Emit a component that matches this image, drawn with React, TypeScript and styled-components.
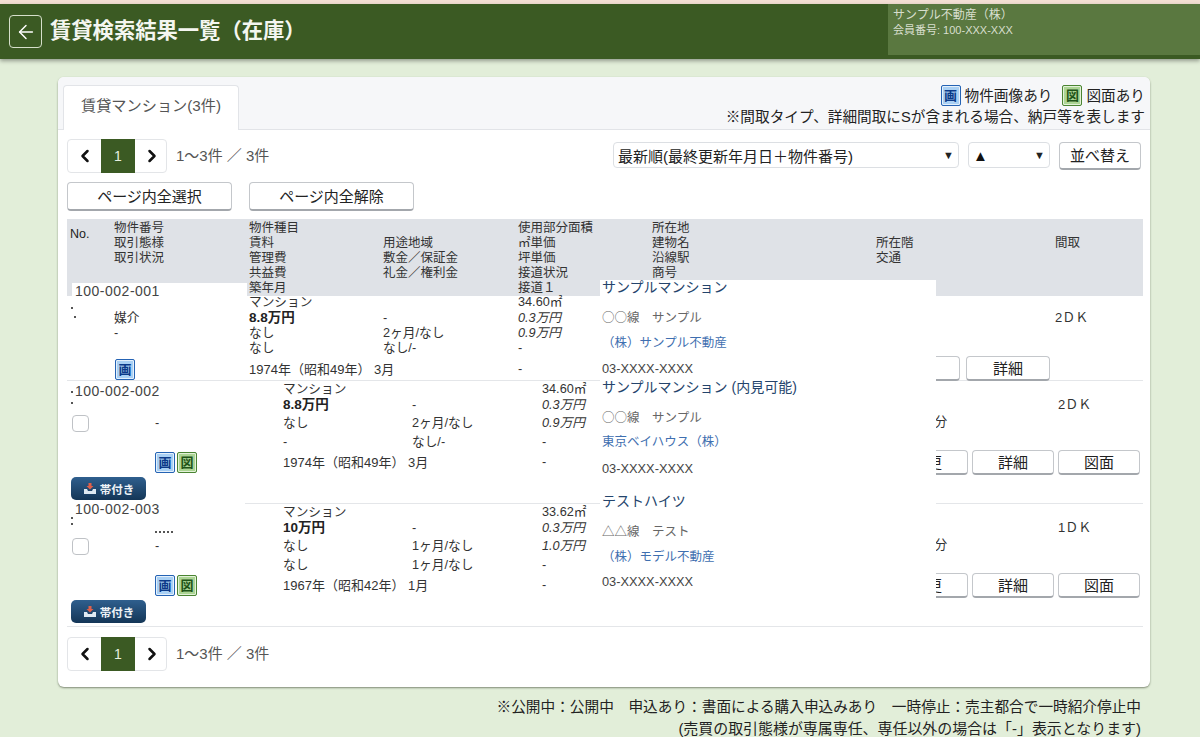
import React from "react";
import styled, { createGlobalStyle } from "styled-components";
import { ArrowLeft, ChevronLeft, ChevronRight } from "lucide-react";

const Global = createGlobalStyle`
  html, body { margin: 0; padding: 0; height: 737px; overflow: hidden; background: #e2eed9; }
  body { font-family: "Liberation Sans", "Noto Sans CJK JP", sans-serif; color: #333; }
  * { box-sizing: border-box; }
`;

const Page = styled.div`
  width: 1200px;
  height: 737px;
  border-top: 4px solid #f3dfd3;
`;
const Header = styled.header`
  height: 55px;
  background: #3b5a23;
  box-shadow: 0 2px 4px rgba(0, 0, 0, 0.35);
  display: flex;
  align-items: flex-start;
`;
const BackButton = styled.button`
  width: 33px;
  height: 33px;
  margin: 11px 0 0 9px;
  padding: 0;
  display: flex;
  align-items: center;
  justify-content: center;
  background: transparent;
  border: 1px solid #d6dfcb;
  border-radius: 4px;
  color: #fff;
`;
const Title = styled.h1`
  margin: 11px 0 0 8px;
  flex: 1;
  font-size: 21.3px;
  line-height: 32px;
  font-weight: 700;
  color: #f4f6f0;
  white-space: nowrap;
`;
const Account = styled.div`
  width: 312px;
  height: 51px;
  padding: 4px 5px;
  background: #5a7840;
  color: #d8dfce;
`;
const AccountName = styled.div`
  font-size: 12px;
  line-height: 15px;
`;
const AccountId = styled.div`
  font-size: 11px;
  line-height: 15px;
`;

const Card = styled.main`
  width: 1092px;
  height: 610px;
  margin: 18px 0 0 58px;
  background: #fff;
  border-radius: 6px;
  box-shadow: 0 1px 2px rgba(60, 70, 50, 0.6);
`;
const TabBar = styled.div`
  height: 53px;
  padding: 8px 5px 0;
  background: #f6f7f9;
  border-radius: 6px 6px 0 0;
  border-bottom: 1px solid #e2e4e8;
  display: flex;
  justify-content: space-between;
`;
const Tab = styled.div`
  width: 176px;
  height: 45px;
  padding-bottom: 8px;
  background: #fff;
  border: 1px solid #e2e4e8;
  border-bottom: none;
  border-radius: 4px 4px 0 0;
  display: flex;
  align-items: center;
  justify-content: center;
  font-size: 15.2px;
  color: #555;
`;
const LegendBlock = styled.div`
  display: flex;
  flex-direction: column;
  align-items: flex-end;
  color: #222;
  font-size: 14.65px;
  line-height: 22px;
`;
const LegendRow = styled.div`
  display: flex;
  align-items: center;
  height: 21px;
  gap: 4px;
`;
const LegendLabel = styled.span<{ $gap?: number }>`
  margin-right: ${(p) => p.$gap ?? 0}px;
`;
const Tile = styled.span<{ $kind: "image" | "plan"; $nudge?: number }>`
  width: 20px;
  height: 21px;
  margin-left: ${(p) => p.$nudge ?? 0}px;
  display: inline-flex;
  align-items: center;
  justify-content: center;
  font-size: 13px;
  line-height: 1;
  font-weight: 700;
  border-radius: 2px;
  border: 1.5px solid ${(p) => (p.$kind === "image" ? "#2563b4" : "#4a8432")};
  box-shadow: inset 0 0 0 1px ${(p) => (p.$kind === "image" ? "#e4f0fb" : "#e3f1d8")};
  background: ${(p) => (p.$kind === "image" ? "#a9d0f4" : "#acd594")};
  color: ${(p) => (p.$kind === "image" ? "#0b3a88" : "#1f5418")};
`;
const TileRow = styled.div`
  display: flex;
  gap: 2px;
`;

const Body = styled.div`
  padding: 9px 7px 0 9px;
`;
const Toolbar = styled.div`
  display: flex;
  align-items: flex-start;
  height: 34px;
`;
const Pager = styled.div`
  display: flex;
  align-items: center;
  height: 34px;
  font-size: 15px;
  color: #555;
`;
const PagerText = styled.span`
  margin-top: -3px;
`;
const PagerBox = styled.div`
  width: 100px;
  height: 34px;
  display: grid;
  grid-template-columns: 33px 34px 33px;
  border: 1px solid #e3e5e8;
  border-radius: 4px;
  margin-right: 9px;
  color: #111;
`;
const PagerCell = styled.span<{ $current?: boolean }>`
  display: flex;
  align-items: center;
  justify-content: center;
  background: ${(p) => (p.$current ? "#3b5a23" : "transparent")};
  color: ${(p) => (p.$current ? "#e8efe0" : "#111")};
  font-size: 14px;
  margin: -1px 0;
`;
const Sorters = styled.div`
  margin-left: auto;
  padding: 3px 2px 0 0;
  display: flex;
  gap: 9px;
`;
const SelectBox = styled.div<{ $w: number }>`
  width: ${(p) => p.$w}px;
  height: 26px;
  padding: 0 4px 0 4px;
  display: flex;
  align-items: center;
  justify-content: space-between;
  background: #fff;
  border: 1px solid #dcdfe3;
  border-radius: 4px;
  font-size: 15px;
  color: #222;
`;
const Caret = styled.span`
  font-size: 11px;
  color: #222;
`;
const SortMark = styled.span`
  font-size: 15px;
  color: #111;
`;
const Button = styled.button<{ $w: number; $h?: number }>`
  width: ${(p) => p.$w}px;
  height: ${(p) => p.$h ?? 25}px;
  padding: 0 0 2px;
  background: #fff;
  border: 1px solid #c4c7cb;
  border-bottom: 2px solid #a3a7ac;
  border-radius: 4px;
  font-family: inherit;
  font-size: 15px;
  color: #222;
  white-space: nowrap;
`;
const SelectAllRow = styled.div`
  display: flex;
  gap: 17px;
  margin: 9px 0 8px;
`;

const TableWrap = styled.div`
  position: relative;
  width: 1076px;
`;
const HeadRow = styled.div`
  height: 77px;
  background: #dfe2e7;
  display: grid;
  grid-template-columns: 47px 135px 134px 135px 134px 224px 179px 88px;
  font-size: 12.5px;
  line-height: 15px;
  color: #333;
  padding-top: 2px;
`;
const HeadCell = styled.div<{ $skip?: number }>`
  padding-top: ${(p) => (p.$skip ?? 0) * 15}px;
  white-space: nowrap;
`;
const HeadNo = styled.div`
  padding: 6px 0 0 3px;
  font-size: 12.5px;
  color: #222;
`;

const Row = styled.div<{ $cols: string; $h: number }>`
  position: relative;
  height: ${(p) => p.$h}px;
  display: grid;
  grid-template-columns: ${(p) => p.$cols};
  align-items: start;
  border-bottom: 1px solid #e4e6e9;
  font-size: 12.7px;
`;
const Stack = styled.div<{ $rows: string; $lift?: number }>`
  display: grid;
  grid-template-rows: ${(p) => p.$rows};
  align-items: center;
  margin-top: ${(p) => p.$lift ?? 0}px;
  min-width: 0;
`;
const Line = styled.span<{ $strong?: boolean; $slant?: boolean }>`
  display: block;
  white-space: nowrap;
  line-height: 1;
  font-size: ${(p) => (p.$strong ? "13.5px" : "inherit")};
  font-weight: ${(p) => (p.$strong ? 700 : 400)};
  font-style: ${(p) => (p.$slant ? "italic" : "normal")};
  color: ${(p) => (p.$strong ? "#222" : "#333")};
`;
const YearLine = styled(Line)`
  font-size: 13px;
`;
const Tail = styled(Stack)<{ $tailCols: string }>`
  grid-template-columns: ${(p) => p.$tailCols};
`;
const AccessLine = styled(Line)`
  grid-row: 3;
  grid-column: 2;
  margin-left: 22px;
`;
const LayoutLine = styled(Line)<{ $row: number }>`
  grid-row: ${(p) => p.$row};
  grid-column: 3;
  font-size: 13px;
`;
const Actions = styled.div<{ $inset: number; $gap: number; $drop?: number }>`
  grid-row: 5;
  grid-column: 1 / -1;
  justify-self: end;
  display: flex;
  gap: ${(p) => p.$gap}px;
  margin-top: ${(p) => p.$drop ?? 0}px;
  margin-right: ${(p) => p.$inset}px;
`;

const NoCell = styled.div`
  display: flex;
  flex-direction: column;
  align-items: flex-start;
`;
const Plate = styled.div<{ $lift: number; $w: number; $inset: number; $h: number }>`
  position: relative;
  z-index: 1;
  width: ${(p) => p.$w}px;
  height: ${(p) => p.$h}px;
  margin: ${(p) => p.$lift}px 0 0 ${(p) => p.$inset}px;
  padding-left: ${(p) => 8 - p.$inset}px;
  background: #fff;
  display: flex;
  align-items: center;
  font-size: 14px;
  letter-spacing: 0.5px;
  color: #444;
  white-space: nowrap;
`;
const Check = styled.span<{ $gap: number }>`
  width: 17px;
  height: 17px;
  margin: ${(p) => p.$gap}px 0 0 5px;
  border: 1px solid #bfc2c6;
  border-radius: 4px;
  background: #fff;
  flex: none;
`;
const Band = styled.button`
  width: 75px;
  height: 23px;
  margin: 45px 0 0 4px;
  padding: 0;
  display: flex;
  align-items: center;
  justify-content: center;
  gap: 3px;
  background: linear-gradient(#2f5f8e, #143657);
  border: none;
  border-radius: 5px;
  color: #eef3f7;
  font-family: inherit;
  font-size: 11.5px;
  font-weight: 700;
`;
const Speck = styled.i<{ $x: number; $y: number; $w?: number }>`
  position: absolute;
  z-index: 2;
  left: ${(p) => p.$x}px;
  top: ${(p) => p.$y}px;
  width: ${(p) => p.$w ?? 2}px;
  height: 1.5px;
  background: repeating-linear-gradient(90deg, #555 0 2px, transparent 2px 4px);
`;

const Mask = styled.aside`
  position: absolute;
  z-index: 2;
  left: 533px;
  top: 61px;
  width: 336px;
  height: 322px;
  padding-left: 2px;
  background: #fff;
`;
const Listing = styled.div<{ $after: number }>`
  margin-bottom: ${(p) => p.$after}px;
`;
const ListingName = styled.div`
  font-size: 14px;
  line-height: 14px;
  color: #24446c;
  white-space: nowrap;
`;
const ListingStation = styled.div`
  margin-top: 16px;
  font-family: "Noto Sans CJK JP", sans-serif;
  font-size: 12.5px;
  line-height: 14px;
  color: #666;
`;
const ListingCompany = styled.div<{ $gap?: number }>`
  margin-top: ${(p) => p.$gap ?? 12}px;
  font-size: 12.5px;
  line-height: 14px;
  color: #3f6fb0;
`;
const ListingPhone = styled.div<{ $gap?: number }>`
  margin-top: ${(p) => p.$gap ?? 12}px;
  font-size: 12.8px;
  line-height: 14px;
  color: #444;
`;

const FootPager = styled(Pager)`
  margin-top: 10px;
`;
const Notes = styled.div`
  width: 1141px;
  margin-top: 9px;
  text-align: right;
  line-height: 22px;
  color: #222;
  white-space: nowrap;
`;
const NoteLine = styled.div<{ $size: number }>`
  font-size: ${(p) => p.$size}px;
`;

const InboxIcon = () => (
  <svg width="14" height="13" viewBox="0 0 14 13" aria-hidden="true">
    <path d="M1 7h3l1 2h4l1-2h3v5H1z" fill="#dfeaf3" />
    <path d="M5.5 1h3v3h2L7 7.5 3.5 4h2z" fill="#e0604a" />
  </svg>
);

const PagerGroup = () => (
  <>
    <PagerBox>
      <PagerCell><ChevronLeft size={20} strokeWidth={3} /></PagerCell>
      <PagerCell $current>1</PagerCell>
      <PagerCell><ChevronRight size={20} strokeWidth={3} /></PagerCell>
    </PagerBox>
    <PagerText>1〜3件 ／ 3件</PagerText>
  </>
);

const ROW1_COLS = "47px 135px 134px 135px 134px 491px";
const ROW2_COLS = "88px 128px 129px 130px 128px 473px";
const ROW1_LINES = "16px 16px 14px 16px 26px";
const ROW2_LINES = "14px 18px 19px 19px 20px";

export default function App() {
  return (
    <Page>
      <Global />
      <Header>
        <BackButton aria-label="戻る"><ArrowLeft size={22} strokeWidth={1.6} /></BackButton>
        <Title>賃貸検索結果一覧（在庫）</Title>
        <Account>
          <AccountName>サンプル不動産（株）</AccountName>
          <AccountId>会員番号: 100-XXX-XXX</AccountId>
        </Account>
      </Header>
      <Card>
        <TabBar>
          <Tab>賃貸マンション(3件)</Tab>
          <LegendBlock>
            <LegendRow>
              <Tile $kind="image">画</Tile>
              <LegendLabel $gap={6}>物件画像あり</LegendLabel>
              <Tile $kind="plan">図</Tile>
              <LegendLabel>図面あり</LegendLabel>
            </LegendRow>
            <div>※間取タイプ、詳細間取にSが含まれる場合、納戸等を表します</div>
          </LegendBlock>
        </TabBar>
        <Body>
          <Toolbar>
            <Pager><PagerGroup /></Pager>
            <Sorters>
              <SelectBox $w={346}>最新順(最終更新年月日＋物件番号)<Caret>▼</Caret></SelectBox>
              <SelectBox $w={82}><SortMark>▲</SortMark><Caret>▼</Caret></SelectBox>
              <Button $w={82} $h={28}>並べ替え</Button>
            </Sorters>
          </Toolbar>
          <SelectAllRow>
            <Button $w={165} $h={29}>ページ内全選択</Button>
            <Button $w={165} $h={29}>ページ内全解除</Button>
          </SelectAllRow>
          <TableWrap>
            <HeadRow>
              <HeadNo>No.</HeadNo>
              <HeadCell>物件番号<br />取引態様<br />取引状況</HeadCell>
              <HeadCell>物件種目<br />賃料<br />管理費<br />共益費<br />築年月</HeadCell>
              <HeadCell $skip={1}>用途地域<br />敷金／保証金<br />礼金／権利金</HeadCell>
              <HeadCell>使用部分面積<br />㎡単価<br />坪単価<br />接道状況<br />接道１</HeadCell>
              <HeadCell>所在地<br />建物名<br />沿線駅<br />商号</HeadCell>
              <HeadCell $skip={1}>所在階<br />交通</HeadCell>
              <HeadCell $skip={1}>間取</HeadCell>
            </HeadRow>

            <Row $cols={ROW1_COLS} $h={85}>
              <Speck $x={4} $y={11} />
              <Speck $x={7} $y={20} />
              <NoCell>
                <Plate $lift={-13} $w={175} $inset={5} $h={16}>100-002-001</Plate>
              </NoCell>
              <Stack $rows={ROW1_LINES} $lift={-2}>
                <Line />
                <Line>媒介</Line>
                <Line>-</Line>
                <Line />
                <Tile $kind="image" $nudge={1}>画</Tile>
              </Stack>
              <Stack $rows={ROW1_LINES} $lift={-2}>
                <Line>マンション</Line>
                <Line $strong>8.8万円</Line>
                <Line>なし</Line>
                <Line>なし</Line>
                <YearLine>1974年（昭和49年） 3月</YearLine>
              </Stack>
              <Stack $rows={ROW1_LINES} $lift={-2}>
                <Line />
                <Line>-</Line>
                <Line>2ヶ月/なし</Line>
                <Line>なし/-</Line>
                <Line />
              </Stack>
              <Stack $rows={ROW1_LINES} $lift={-2}>
                <Line>34.60㎡</Line>
                <Line $slant>0.3万円</Line>
                <Line $slant>0.9万円</Line>
                <Line>-</Line>
                <Line>-</Line>
              </Stack>
              <Tail $rows={ROW1_LINES} $lift={-3} $tailCols="224px 179px 88px">
                <LayoutLine $row={2}>2ＤＫ</LayoutLine>
                <Actions $inset={93} $gap={6}>
                  <Button $w={84}>変更</Button>
                  <Button $w={84}>詳細</Button>
                </Actions>
              </Tail>
            </Row>

            <Row $cols={ROW2_COLS} $h={123}>
              <Speck $x={4} $y={10} />
              <Speck $x={4} $y={21} />
              <NoCell>
                <Plate $lift={0} $w={88} $inset={0} $h={20}>100-002-002</Plate>
                <Check $gap={14} />
                <Band><InboxIcon />帯付き</Band>
              </NoCell>
              <Stack $rows={ROW2_LINES} $lift={1}>
                <Line />
                <Line />
                <Line>-</Line>
                <Line />
                <TileRow><Tile $kind="image">画</Tile><Tile $kind="plan">図</Tile></TileRow>
              </Stack>
              <Stack $rows={ROW2_LINES} $lift={1}>
                <Line>マンション</Line>
                <Line $strong>8.8万円</Line>
                <Line>なし</Line>
                <Line>-</Line>
                <YearLine>1974年（昭和49年） 3月</YearLine>
              </Stack>
              <Stack $rows={ROW2_LINES} $lift={1}>
                <Line />
                <Line>-</Line>
                <Line>2ヶ月/なし</Line>
                <Line>なし/-</Line>
                <Line />
              </Stack>
              <Stack $rows={ROW2_LINES} $lift={1}>
                <Line>34.60㎡</Line>
                <Line $slant>0.3万円</Line>
                <Line $slant>0.9万円</Line>
                <Line>-</Line>
                <Line>-</Line>
              </Stack>
              <Tail $rows={ROW2_LINES} $tailCols="210px 178px 85px">
                <LayoutLine $row={2}>2ＤＫ</LayoutLine>
                <AccessLine>徒歩5分</AccessLine>
                <Actions $inset={3} $gap={4} $drop={3}>
                  <Button $w={82}>変更</Button>
                  <Button $w={82}>詳細</Button>
                  <Button $w={82}>図面</Button>
                </Actions>
              </Tail>
            </Row>

            <Row $cols={ROW2_COLS} $h={123}>
              <Speck $x={4} $y={13} />
              <Speck $x={4} $y={19} />
              <Speck $x={88} $y={27} $w={20} />
              <NoCell>
                <Plate $lift={-4} $w={178} $inset={0} $h={18}>100-002-003</Plate>
                <Check $gap={20} />
                <Band><InboxIcon />帯付き</Band>
              </NoCell>
              <Stack $rows={ROW2_LINES} $lift={1}>
                <Line />
                <Line />
                <Line>-</Line>
                <Line />
                <TileRow><Tile $kind="image">画</Tile><Tile $kind="plan">図</Tile></TileRow>
              </Stack>
              <Stack $rows={ROW2_LINES} $lift={1}>
                <Line>マンション</Line>
                <Line $strong>10万円</Line>
                <Line>なし</Line>
                <Line>なし</Line>
                <YearLine>1967年（昭和42年） 1月</YearLine>
              </Stack>
              <Stack $rows={ROW2_LINES} $lift={1}>
                <Line />
                <Line>-</Line>
                <Line>1ヶ月/なし</Line>
                <Line>1ヶ月/なし</Line>
                <Line />
              </Stack>
              <Stack $rows={ROW2_LINES} $lift={1}>
                <Line>33.62㎡</Line>
                <Line $slant>0.3万円</Line>
                <Line $slant>1.0万円</Line>
                <Line>-</Line>
                <Line>-</Line>
              </Stack>
              <Tail $rows={ROW2_LINES} $tailCols="210px 178px 85px">
                <LayoutLine $row={2}>1ＤＫ</LayoutLine>
                <AccessLine>徒歩8分</AccessLine>
                <Actions $inset={3} $gap={4} $drop={3}>
                  <Button $w={82}>変更</Button>
                  <Button $w={82}>詳細</Button>
                  <Button $w={82}>図面</Button>
                </Actions>
              </Tail>
            </Row>

            <Mask>
              <Listing $after={4}>
                <ListingName>サンプルマンション</ListingName>
                <ListingStation>○○線　サンプル</ListingStation>
                <ListingCompany>（株）サンプル不動産</ListingCompany>
                <ListingPhone>03-XXXX-XXXX</ListingPhone>
              </Listing>
              <Listing $after={18}>
                <ListingName>サンプルマンション (内見可能)</ListingName>
                <ListingStation>○○線　サンプル</ListingStation>
                <ListingCompany $gap={11}>東京ベイハウス（株）</ListingCompany>
                <ListingPhone $gap={13}>03-XXXX-XXXX</ListingPhone>
              </Listing>
              <Listing $after={0}>
                <ListingName>テストハイツ</ListingName>
                <ListingStation>△△線　テスト</ListingStation>
                <ListingCompany>（株）モデル不動産</ListingCompany>
                <ListingPhone $gap={11}>03-XXXX-XXXX</ListingPhone>
              </Listing>
            </Mask>
          </TableWrap>
          <FootPager><PagerGroup /></FootPager>
        </Body>
      </Card>
      <Notes>
        <NoteLine $size={14.66}>※公開中：公開中　申込あり：書面による購入申込みあり　一時停止：売主都合で一時紹介停止中</NoteLine>
        <NoteLine $size={14.95}>(売買の取引態様が専属専任、専任以外の場合は「-」表示となります)</NoteLine>
      </Notes>
    </Page>
  );
}
